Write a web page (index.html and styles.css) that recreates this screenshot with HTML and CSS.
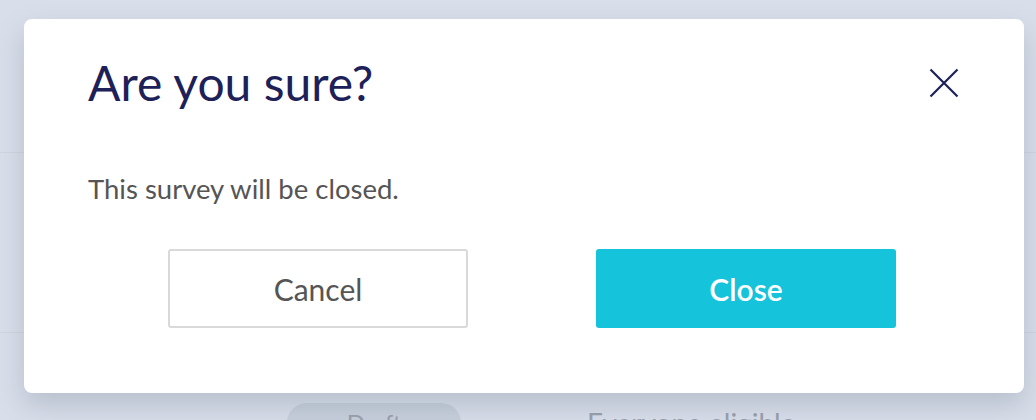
FILE: index.html
```html
<!DOCTYPE html>
<html lang="en">

<head>
    <meta charset="UTF-8">
    <meta name="viewport" content="width=device-width, initial-scale=1.0">
    <title>Close survey</title>
    <link rel="stylesheet" href="styles.css">
</head>

<body>
    <div id="page">
        <div class="row row-head"></div>
        <div class="row row-mid"></div>
        <div class="row row-foot">
            <span class="pill">Draft</span>
            <span class="eligible">Everyone eligible</span>
        </div>
    </div>

    <div id="modal">
        <div class="modal-head">
            <h2>Are you sure?</h2>
            <button class="close-x" aria-label="Close">
                <svg width="30" height="30" viewBox="0 0 30 30">
                    <path d="M1.5 1.5 L28.5 28.5 M28.5 1.5 L1.5 28.5" stroke="#1d2158" stroke-width="2.2" fill="none" />
                </svg>
            </button>
        </div>
        <p class="msg">This survey will be closed.</p>
        <div class="actions">
            <button class="btn btn-cancel">Cancel</button>
            <button class="btn btn-close">Close</button>
        </div>
    </div>
</body>

</html>
```

FILE: styles.css
```css
* {
    margin: 0;
    padding: 0;
    box-sizing: border-box;
}

body {
    background: #d9dfea;
    font-family: Lato, "Open Sans", sans-serif;
    height: 420px;
    overflow: hidden;
}

/* 背后的页面 */
#page {
    display: flex;
    flex-direction: column;
}

.row-head {
    height: 153px;
    border-bottom: 1px solid #d0d6e1;
}

.row-mid {
    height: 180px;
    border-bottom: 1px solid #d0d6e1;
}

.row-foot {
    display: flex;
    align-items: flex-start;
    padding: 70px 0 0 287px;
    gap: 126px;
}

.pill {
    width: 174px;
    height: 40px;
    border-radius: 20px;
    background: #c8d0dc;
    color: #9aa1ad;
    font-size: 24px;
    text-align: center;
    line-height: 40px;
}

.eligible {
    color: #9aa1ad;
    font-size: 28px;
    line-height: 40px;
}

/* 弹窗 */
#modal {
    position: absolute;
    left: 24px;
    top: 19px;
    width: 1000px;
    height: 374px;
    background: #fff;
    border-radius: 8px;
    box-shadow: 0 12px 28px rgba(60, 72, 100, 0.22);
    padding: 0 64px;
}

.modal-head {
    display: flex;
    justify-content: space-between;
    align-items: center;
    padding-top: 32px;
}

.modal-head h2 {
    font-size: 48px;
    font-weight: 400;
    color: #1d2158;
    line-height: 64px;
}

.close-x {
    border: none;
    background: none;
    cursor: pointer;
    display: flex;
    margin-right: 1px;
}

.msg {
    margin-top: 58px;
    font-size: 27.5px;
    color: #555;
    line-height: 32px;
}

.actions {
    display: flex;
    gap: 128px;
    margin-top: 44px;
    padding-left: 80px;
}

.btn {
    width: 300px;
    height: 79px;
    border-radius: 3px;
    font-family: Lato, "Open Sans", sans-serif;
    font-size: 30px;
    cursor: pointer;
}

.btn-cancel {
    background: #fff;
    border: 2px solid #d9d9d9;
    color: #555;
}

.btn-close {
    background: #15c4da;
    border: none;
    color: #fff;
    font-weight: 600;
}
```
